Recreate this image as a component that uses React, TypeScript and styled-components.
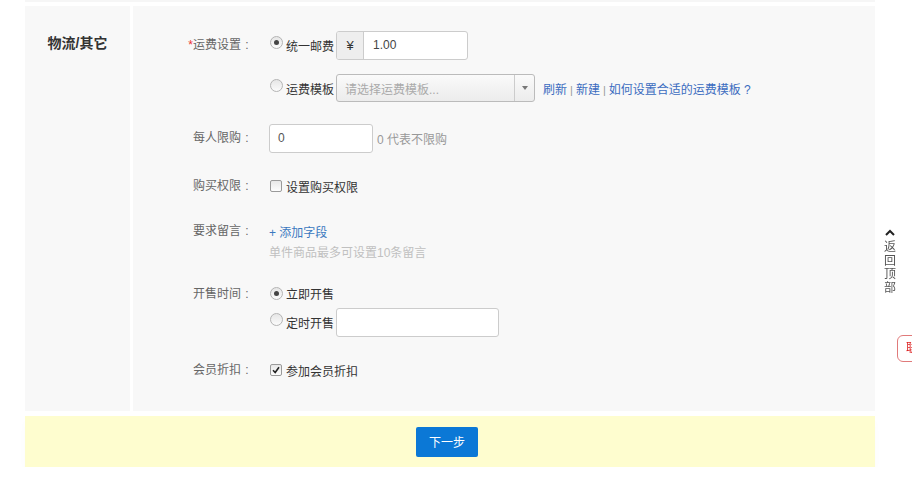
import React from 'react';
import styled, { createGlobalStyle } from 'styled-components';

const GlobalStyle = createGlobalStyle`
  html, body {
    margin: 0;
    padding: 0;
    background: #fff;
    font-family: "Liberation Sans", "Noto Sans CJK SC", sans-serif;
    font-size: 12px;
    color: #333;
  }
`;

const Page = styled.div`
  width: 850px;
  margin-left: 25px;
  padding-top: 6px;
`;

const TopLine = styled.div`
  height: 2px;
  margin-top: -6px;
  margin-bottom: 4px;
  background: #f6f6f6;
`;

const Panel = styled.div`
  display: flex;
  background: #f8f8f8;
`;

const SideTitle = styled.div`
  width: 105px;
  flex-shrink: 0;
  padding-top: 24px;
  text-align: center;
  font-size: 14px;
  font-weight: bold;
  line-height: 26px;
  color: #333;
  border-right: 3px solid #fff;
`;

const Form = styled.div`
  flex: 1;
  padding: 24px 0 26px;
`;

const Row = styled.div<{ $gap?: number }>`
  display: flex;
  margin-top: ${({ $gap }) => $gap ?? 0}px;
`;

const Label = styled.div`
  width: 120px;
  flex-shrink: 0;
  text-align: right;
  line-height: 30px;
  color: #666;
  padding-right: 16px;
`;

const Colon = styled.span`
  display: inline-block;
  width: 12px;
  text-align: center;
`;

const Star = styled.span`
  color: #e33;
`;

const Controls = styled.div`
  display: flex;
  flex-direction: column;
`;

const Line = styled.div<{ $h?: number }>`
  display: flex;
  align-items: center;
  height: ${({ $h }) => $h ?? 30}px;
`;

const Radio = styled.span<{ $checked?: boolean; $raised?: boolean }>`
  display: inline-block;
  position: relative;
  width: 11px;
  height: 11px;
  border-radius: 50%;
  border: 1px solid #b4b4b4;
  background: linear-gradient(#e6e6e6, #fbfbfb);
  margin: ${({ $raised }) => ($raised ? '-6px' : '0')} 3px 0 1px;
  flex-shrink: 0;
  &::after {
    content: '';
    display: ${({ $checked }) => ($checked ? 'block' : 'none')};
    position: absolute;
    left: 3px;
    top: 3px;
    width: 5px;
    height: 5px;
    border-radius: 50%;
    background: #444;
  }
`;

const Check = styled.span`
  display: inline-flex;
  align-items: center;
  justify-content: center;
  width: 10px;
  height: 10px;
  border: 1px solid #9a9a9a;
  border-radius: 2px;
  background: linear-gradient(#e8e8e8, #fdfdfd);
  margin: 0 4px 0 1px;
  flex-shrink: 0;
`;

const OptText = styled.span`
  color: #333;
  margin-right: 2px;
`;

const InputGroup = styled.div`
  display: flex;
  height: 29px;
  border: 1px solid #ccc;
  border-radius: 3px;
  background: #fff;
  box-sizing: border-box;
  overflow: hidden;
`;

const Addon = styled.span`
  width: 26px;
  display: flex;
  align-items: center;
  justify-content: center;
  background: #eee;
  border-right: 1px solid #ccc;
  color: #333;
  font-size: 13px;
`;

const Field = styled.div<{ $w: number }>`
  width: ${({ $w }) => $w}px;
  height: 29px;
  box-sizing: border-box;
  display: flex;
  align-items: center;
  padding-left: 8px;
  background: #fff;
  border: 1px solid #ccc;
  border-radius: 3px;
  color: #555;
`;

const GroupValue = styled.span`
  padding-left: 9px;
  width: 94px;
  display: flex;
  align-items: center;
  color: #444;
`;

const Select = styled.div`
  width: 199px;
  height: 28px;
  box-sizing: border-box;
  display: flex;
  border: 1px solid #bbb;
  border-radius: 3px;
  background: linear-gradient(#fafafa, #ececec);
  overflow: hidden;
`;

const SelectText = styled.span`
  flex: 1;
  display: flex;
  align-items: center;
  padding-left: 8px;
  color: #aaa;
`;

const SelectArrow = styled.span`
  width: 19px;
  border-left: 1px solid #ccc;
  display: flex;
  align-items: center;
  justify-content: center;
  &::after {
    content: '';
    border-left: 3px solid transparent;
    border-right: 3px solid transparent;
    border-top: 4px solid #777;
  }
`;

const Links = styled.span`
  margin-left: 8px;
  color: #999;
`;

const Link = styled.a`
  color: #3b6cc0;
  text-decoration: none;
`;

const Sep = styled.span`
  color: #999;
  margin: 0 3px;
  font-size: 11px;
`;

const Hint = styled.span`
  color: #999;
  margin-left: 4px;
`;

const HintLine = styled.div`
  height: 14px;
  line-height: 14px;
  color: #c0c0c0;
`;

const AddLink = styled.a`
  color: #3b78c0;
  text-decoration: none;
`;

const FooterBar = styled.div`
  margin-top: 5px;
  height: 51px;
  background: #fefdcf;
  display: flex;
  align-items: center;
  justify-content: center;
  box-shadow: 0 6px 8px rgba(0, 0, 0, 0.02);
`;

const NextButton = styled.button`
  width: 62px;
  height: 30px;
  border: none;
  border-radius: 2px;
  background: #0b78d6;
  color: #fff;
  font-family: inherit;
  font-size: 12px;
  margin-right: 6px;
  cursor: pointer;
`;

const BackTop = styled.div`
  position: fixed;
  left: 883px;
  top: 229px;
  width: 14px;
  display: flex;
  flex-direction: column;
  align-items: center;
  color: #555;
  font-size: 12px;
  line-height: 13.5px;
  svg {
    margin-bottom: 5px;
  }
`;

const Contact = styled.div`
  position: fixed;
  left: 897px;
  top: 335px;
  width: 40px;
  height: 27px;
  box-sizing: border-box;
  border: 1px solid #e07a7a;
  border-radius: 6px;
  background: #fff;
  color: #d22;
  font-size: 12px;
  line-height: 25px;
  padding-left: 8px;
  white-space: nowrap;
`;

function CheckMark() {
  return (
    <svg width='8' height='8' viewBox='0 0 8 8'>
      <path d='M1 4.2 L3.2 6.5 L7 1.2' fill='none' stroke='#222' strokeWidth='1.6' />
    </svg>
  );
}

function FieldLabel({ text, required }: { text: string; required?: boolean }) {
  return (
    <Label>
      {required && <Star>*</Star>}
      {text}
      <Colon>:</Colon>
    </Label>
  );
}

export default function App() {
  return (
    <>
      <GlobalStyle />
      <Page>
        <TopLine />
        <Panel>
          <SideTitle>物流/其它</SideTitle>
          <Form>
            <Row>
              <FieldLabel text='运费设置' required />
              <Controls>
                <Line>
                  <Radio $checked $raised />
                  <OptText>统一邮费</OptText>
                  <InputGroup>
                    <Addon>¥</Addon>
                    <GroupValue>1.00</GroupValue>
                  </InputGroup>
                </Line>
                <Line $h={28} style={{ marginTop: 14 }}>
                  <Radio $raised />
                  <OptText>运费模板</OptText>
                  <Select>
                    <SelectText>请选择运费模板...</SelectText>
                    <SelectArrow />
                  </Select>
                  <Links>
                    <Link href='#'>刷新</Link>
                    <Sep>|</Sep>
                    <Link href='#'>新建</Link>
                    <Sep>|</Sep>
                    <Link href='#'>如何设置合适的运费模板 ?</Link>
                  </Links>
                </Line>
              </Controls>
            </Row>

            <Row $gap={21}>
              <FieldLabel text='每人限购' />
              <Line>
                <Field $w={104}>0</Field>
                <Hint>0 代表不限购</Hint>
              </Line>
            </Row>

            <Row $gap={18}>
              <FieldLabel text='购买权限' />
              <Line>
                <Check />
                <OptText>设置购买权限</OptText>
              </Line>
            </Row>

            <Row $gap={15}>
              <FieldLabel text='要求留言' />
              <Controls>
                <Line>
                  <AddLink href='#'>+ 添加字段</AddLink>
                </Line>
                <HintLine>单件商品最多可设置10条留言</HintLine>
              </Controls>
            </Row>

            <Row $gap={19}>
              <FieldLabel text='开售时间' />
              <Controls>
                <Line $h={28}>
                  <Radio $checked />
                  <OptText>立即开售</OptText>
                </Line>
                <Line>
                  <Radio $raised />
                  <OptText>定时开售</OptText>
                  <Field $w={163} />
                </Line>
              </Controls>
            </Row>

            <Row $gap={18}>
              <FieldLabel text='会员折扣' />
              <Line>
                <Check>
                  <CheckMark />
                </Check>
                <OptText>参加会员折扣</OptText>
              </Line>
            </Row>
          </Form>
        </Panel>
        <FooterBar>
          <NextButton>下一步</NextButton>
        </FooterBar>
      </Page>
      <BackTop>
        <svg width='10' height='7' viewBox='0 0 10 7'>
          <path d='M1 6 L5 2 L9 6' fill='none' stroke='#222' strokeWidth='2' />
        </svg>
        <span>返</span>
        <span>回</span>
        <span>顶</span>
        <span>部</span>
      </BackTop>
      <Contact>联系客服</Contact>
    </>
  );
}
